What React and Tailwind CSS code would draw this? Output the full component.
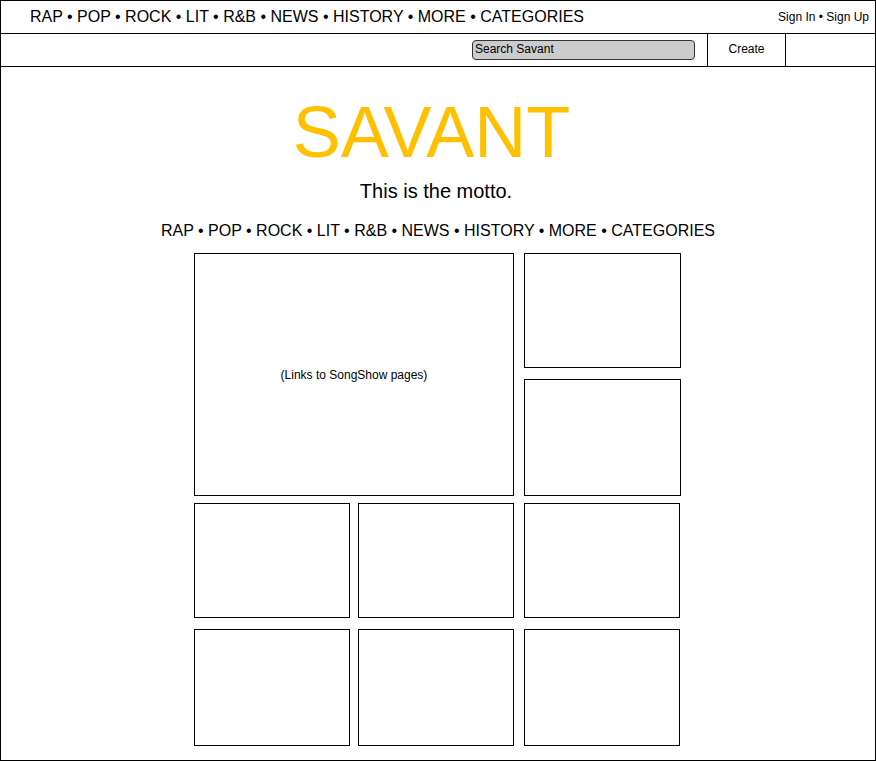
import React from "react";

const NAV = "RAP • POP • ROCK • LIT • R&B • NEWS • HISTORY • MORE • CATEGORIES";

function Box({ className = "", children }) {
  return (
    <div className={`border border-black bg-white flex items-center justify-center ${className}`}>
      {children}
    </div>
  );
}

export default function App() {
  return (
    <div
      className="w-[876px] h-[761px] border border-black bg-white text-black flex flex-col overflow-hidden"
      style={{ fontFamily: '"Liberation Sans", Arial, sans-serif' }}
    >
      {/* Top bar */}
      <div className="h-[33px] border-b border-black flex items-start justify-between shrink-0">
        <div className="pl-[29px] pt-[8px] text-[16px] leading-none whitespace-nowrap">{NAV}</div>
        <div className="pr-[6px] pt-[10px] text-[12px] leading-none whitespace-nowrap">Sign In • Sign Up</div>
      </div>

      {/* Second bar */}
      <div className="h-[33px] border-b border-black flex items-stretch justify-end shrink-0">
        <div className="pt-[6px] mr-[12px]">
          <div className="w-[223px] h-[20px] border border-[#333] rounded-[4px] bg-[#cccccc] pl-[2px] pt-[1px] text-[12px] leading-[14px] whitespace-nowrap">
            Search Savant
          </div>
        </div>
        <div className="w-[78px] border-l border-black flex justify-center pt-[9px] text-[12px] leading-none">
          Create
        </div>
        <div className="w-[90px] border-l border-black" />
      </div>

      {/* Main */}
      <div className="flex flex-col items-center">
        <div className="mt-[29px] mr-[13px] h-[72px] text-[72px] leading-none text-[#ffc000] whitespace-nowrap">SAVANT</div>
        <div className="mt-[13px] mr-[4px] h-[20px] text-[20px] leading-none whitespace-nowrap">This is the motto.</div>
        <div className="mt-[22px] h-[16px] text-[16px] leading-none whitespace-nowrap">{NAV}</div>

        <div className="mt-[14px] mr-[1px] w-[487px] flex flex-col">
          <div className="flex gap-[10px]">
            <Box className="w-[320px] h-[243px] text-[12px]">(Links to SongShow pages)</Box>
            <div className="flex flex-col gap-[11px]">
              <Box className="w-[157px] h-[115px]" />
              <Box className="w-[157px] h-[117px]" />
            </div>
          </div>
          <div className="mt-[7px] flex">
            <Box className="w-[156px] h-[115px]" />
            <Box className="ml-[8px] w-[156px] h-[115px]" />
            <Box className="ml-[10px] w-[156px] h-[115px]" />
          </div>
          <div className="mt-[11px] flex">
            <Box className="w-[156px] h-[117px]" />
            <Box className="ml-[8px] w-[156px] h-[117px]" />
            <Box className="ml-[10px] w-[156px] h-[117px]" />
          </div>
        </div>
      </div>
    </div>
  );
}
